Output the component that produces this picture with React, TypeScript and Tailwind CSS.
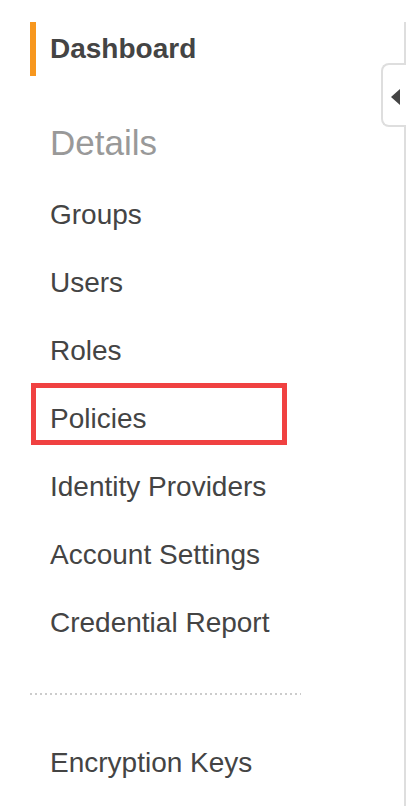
import React from "react";

const items = [
  "Groups",
  "Users",
  "Roles",
  "Policies",
  "Identity Providers",
  "Account Settings",
  "Credential Report",
];

export default function App() {
  return (
    <div
      className="relative w-[414px] h-[806px] bg-white overflow-hidden flex pt-[22px]"
      style={{ fontFamily: '"Liberation Sans", Arial, Helvetica, sans-serif' }}
    >
      <nav className="w-[406px] border-r-2 border-[#dedede] pl-[30px]">
        <div className="h-[54px] border-l-[6px] border-[#f7971e] pl-[14px] flex items-center text-[28px] font-bold text-[#444]">
          Dashboard
        </div>
        <div className="mt-[47px] pl-[20px] text-[35px] leading-[40px] text-[#999]">
          Details
        </div>
        <ul className="mt-[18px]">
          {items.map((it) => (
            <li
              key={it}
              className="relative h-[68px] leading-[68px] pl-[20px] text-[28px] text-[#444]"
            >
              {it}
              {it === "Policies" && (
                <div className="pointer-events-none absolute left-[1px] top-[-2px] w-[256px] h-[62px] border-[5px] border-[#f04141]" />
              )}
            </li>
          ))}
        </ul>
        <div className="mt-[36px] w-[271px] h-[2px] bg-[linear-gradient(to_right,#cccccc_2px,transparent_2px)] bg-[length:5px_2px]" />
        <div className="mt-[34px] h-[68px] leading-[68px] pl-[20px] text-[28px] text-[#444]">
          Encryption Keys
        </div>
      </nav>
      <button className="absolute left-[381px] top-[63px] w-[25px] h-[64px] border-2 border-r-0 border-[#dedede] rounded-l-[8px] bg-white flex items-start pt-[24px] pl-[8px]">
        <svg width="9" height="16" viewBox="0 0 9 16">
          <polygon points="9,0 9,16 0,8" fill="#444" />
        </svg>
      </button>
    </div>
  );
}
